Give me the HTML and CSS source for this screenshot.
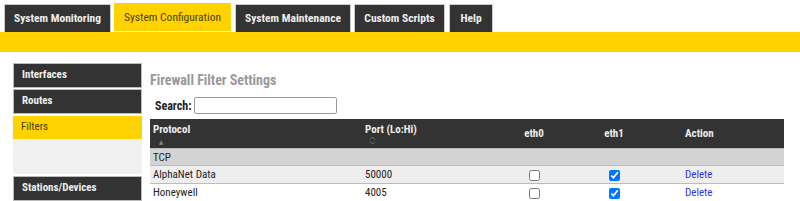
FILE: index.html
```html
<!DOCTYPE html>
<html lang="en">
<head>
  <meta charset="UTF-8" />
  <title>System Configuration</title>
  <link rel="stylesheet" href="styles.css">
</head>
<body>

  <div class="tabs">
    <a class="tab t-mon">System Monitoring</a>
    <a class="tab t-conf active">System Configuration</a>
    <a class="tab t-maint">System Maintenance</a>
    <a class="tab t-scripts">Custom Scripts</a>
    <a class="tab t-help">Help</a>
  </div>
  <div class="bar"></div>

  <div class="main">
    <div class="side">
      <a class="side-item">Interfaces</a>
      <a class="side-item">Routes</a>
      <a class="side-item active">Filters</a>
      <div class="side-fill"></div>
      <a class="side-item">Stations/Devices</a>
    </div>

    <div class="content">
      <h2>Firewall Filter Settings</h2>
      <div class="search">
        <label for="search">Search:</label>
        <input type="text" id="search" />
      </div>

      <table>
        <thead>
          <tr>
            <th class="col-proto">Protocol<span class="sort">&#9650;</span></th>
            <th class="col-port">Port (Lo:Hi)<span class="sort both"><svg width="7" height="9" viewBox="0 0 7 9"><path d="M1 3.5 L3.5 1 L6 3.5 M1 5.5 L3.5 8 L6 5.5" fill="none" stroke="#777" stroke-width="1"/></svg></span></th>
            <th class="center col-eth">eth0</th>
            <th class="center col-eth">eth1</th>
            <th class="col-action">Action</th>
          </tr>
        </thead>
        <tbody>
          <tr class="group">
            <td colspan="5">TCP</td>
          </tr>
          <tr class="odd">
            <td>AlphaNet Data</td>
            <td>50000</td>
            <td class="center"><input type="checkbox" /></td>
            <td class="center"><input type="checkbox" checked /></td>
            <td class="col-action"><a href="#">Delete</a></td>
          </tr>
          <tr>
            <td>Honeywell</td>
            <td>4005</td>
            <td class="center"><input type="checkbox" /></td>
            <td class="center"><input type="checkbox" checked /></td>
            <td class="col-action"><a href="#">Delete</a></td>
          </tr>
        </tbody>
      </table>
    </div>
  </div>

</body>
</html>
```

FILE: styles.css
```css
body {
  font-family: "Roboto Condensed", "Liberation Sans Narrow", "DejaVu Sans Condensed", Roboto, sans-serif;
  font-size: 11px;
  color: #222;
  margin: 0;
  background: white;
}

.tabs {
  display: flex;
  align-items: flex-end;
  padding: 3px 0 0 4px;
  height: 32px;
  box-sizing: border-box;
}

.tab {
  background: #333;
  color: #eee;
  font-size: 11.5px;
  font-weight: bold;
  border: 1px solid #ccc;
  border-bottom: none;
  height: 28px;
  line-height: 27px;
  text-align: center;
  box-sizing: border-box;
  white-space: nowrap;
}

.t-mon { width: 107px; }
.t-conf { width: 119px; margin-left: 2px; }
.t-maint { width: 116px; margin-left: 3px; }
.t-scripts { width: 91px; margin-left: 3px; }
.t-help { width: 44px; margin-left: 4px; }

.tab.active {
  background: #ffd200;
  color: #4a4000;
  font-weight: normal;
  border-color: #fff;
  height: 29px;
  line-height: 28px;
  margin-bottom: 1px;
}

.bar {
  background: #ffd200;
  height: 20px;
}

.main {
  display: flex;
  padding: 11px 0 0 13px;
}

.side {
  width: 129px;
  display: flex;
  flex-direction: column;
}

.side-item {
  background: #333;
  color: #eee;
  font-weight: bold;
  border: 1px solid #bbb;
  height: 25px;
  line-height: 21px;
  padding-left: 8px;
  box-sizing: border-box;
  margin-bottom: 1px;
}

.side-item.active {
  background: #ffd200;
  color: #4a4000;
  font-weight: normal;
  border: none;
  height: 23px;
  margin-top: 1px;
  margin-bottom: 0;
}

.side-fill {
  background: #f0f0f0;
  height: 35px;
  margin-bottom: 2px;
}

.content {
  margin-left: 8px;
  flex: 1;
}

h2 {
  font-size: 14px;
  color: #999;
  margin: 9px 0 0 0;
}

.search {
  display: flex;
  align-items: center;
  margin: 9px 0 5px 5px;
  gap: 3px;
}

.search label {
  font-size: 12px;
  font-weight: bold;
  color: #222;
}

.search input {
  width: 143px;
  height: 17px;
  border: 1px solid #999;
  border-radius: 2px;
  box-sizing: border-box;
  padding: 0;
}

table {
  width: 634px;
  border-collapse: collapse;
}

th {
  background: #333;
  color: #eee;
  font-weight: bold;
  text-align: left;
  vertical-align: top;
  height: 28px;
  padding: 4px 3px 0 3px;
  box-sizing: border-box;
  border-bottom: 1px solid #bbb;
}

th.center {
  text-align: center;
  vertical-align: middle;
  padding-top: 0;
}

th.col-action {
  vertical-align: middle;
  padding-top: 0;
}

.col-proto { width: 212px; }
.col-port { width: 132px; }
.col-eth { width: 80px; }
.col-action { padding-left: 31px; }

.sort {
  display: block;
  color: #888;
  font-size: 6px;
  line-height: 12px;
  padding-left: 6px;
}

.sort.both {
  padding-left: 4px;
  line-height: 10px;
}

td {
  height: 17px;
  padding: 0 3px;
  border-bottom: 1px solid #bbb;
}

td.center {
  text-align: center;
}

tr.group td {
  background: #d3d3d3;
  height: 16px;
}

tr.odd td {
  background: #eee;
}

td input[type="checkbox"] {
  width: 11px;
  height: 11px;
  margin: 0;
  vertical-align: middle;
}

td a {
  color: #3333ee;
  text-decoration: none;
}
```
